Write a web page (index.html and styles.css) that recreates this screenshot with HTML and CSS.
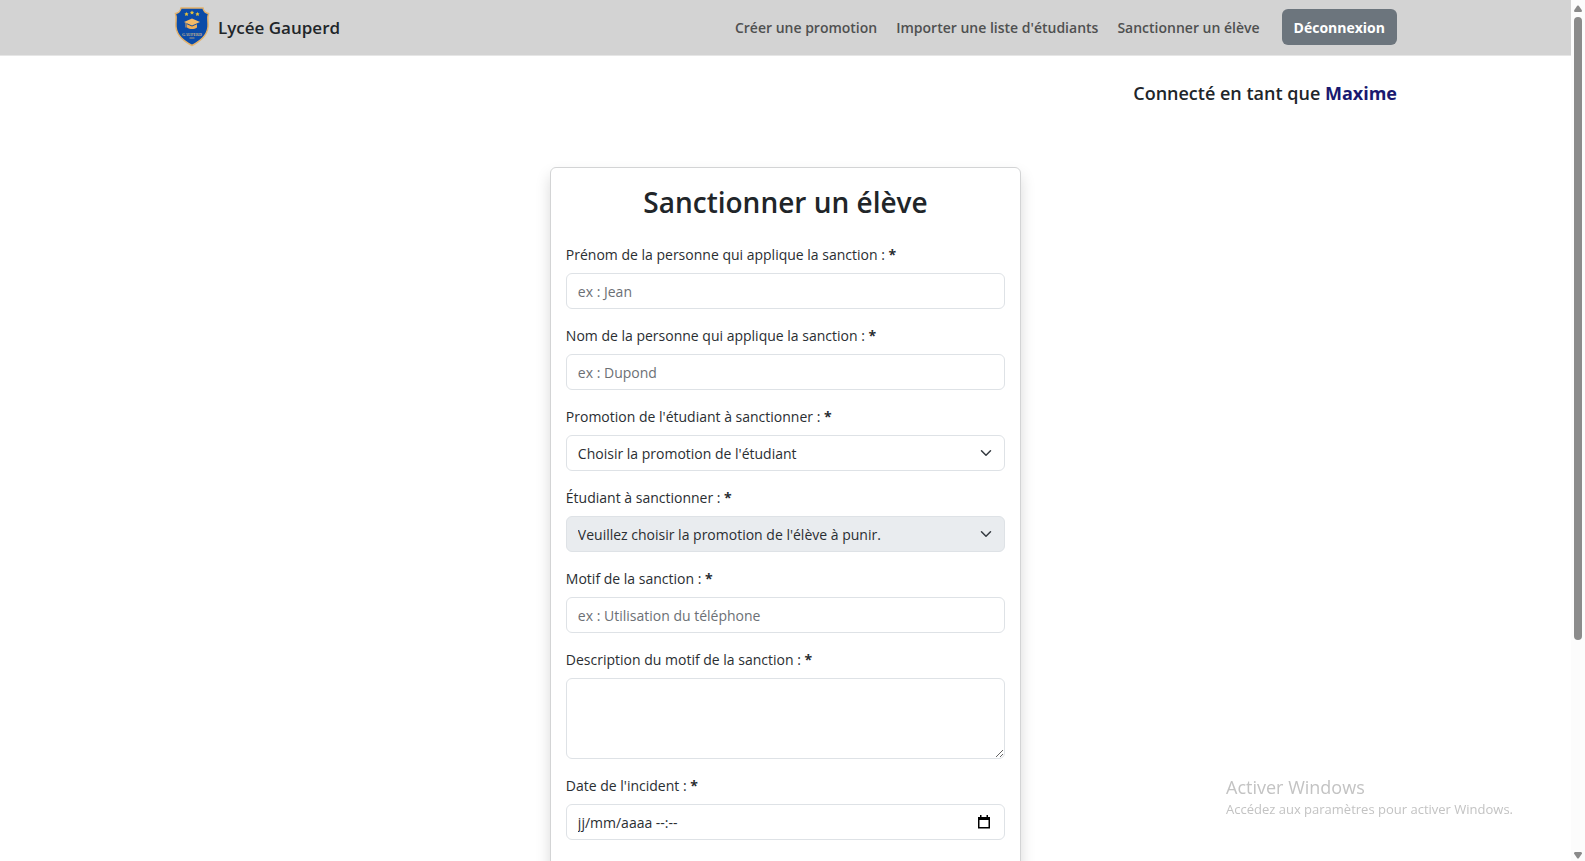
FILE: index.html
```html
<!DOCTYPE html>
<html lang="fr">
<head>
<meta charset="utf-8">
<meta name="viewport" content="width=device-width, initial-scale=1">
<title>Lycée Gauperd</title>
<link rel="stylesheet" href="styles.css">
</head>
<body class="shell">
<div class="page">
  <header class="navbar">
    <a class="brand" href="#">
      <svg class="brand-logo" viewBox="0 0 36 40" aria-hidden="true">
        <path d="M7 1H29C29.500 4 31.500 6 34.500 6.500C33 11 34.500 15 34 20C33 29 26 34 18 38.500C10 34 3 29 2 20C1.500 15 3 11 1.500 6.500C4.500 6 6.500 4 7 1Z" fill="#0b4ba8" stroke="#e3b26c" stroke-width="1.500"/>
        <path d="M12.500 5l.7 1.300 1.400.2-1 1 .2 1.400-1.300-.6-1.300.6.2-1.400-1-1 1.400-.2zM18 3.500l.7 1.300 1.400.2-1 1 .2 1.400-1.300-.6-1.300.6.2-1.400-1-1 1.400-.2zM23.500 5l.7 1.300 1.400.2-1 1 .2 1.400-1.300-.6-1.300.6.2-1.400-1-1 1.400-.2z" fill="#e3c03c"/>
        <path d="M18 11.500L26 15L18 18.500L10 15Z" fill="#f3ba68"/>
        <path d="M13 17.300L18 19.500L23 17.300V20.500C20 22.500 16 22.500 13 20.500Z" fill="#edae58"/>
        <path d="M12 15.500V20.500" stroke="#edae58" stroke-width="1"/>
        <text class="logo-name" x="18" y="28.500" text-anchor="middle">GAUPERD</text>
        <path d="M15.500 31H20.500" stroke="#a99b84" stroke-width="1"/>
      </svg>
      <span>Lycée Gauperd</span>
    </a>
    <nav class="menu">
      <a class="menu-link" href="#">Créer une promotion</a>
      <a class="menu-link" href="#">Importer une liste d'étudiants</a>
      <a class="menu-link" href="#">Sanctionner un élève</a>
      <button class="logout" type="button">Déconnexion</button>
    </nav>
  </header>

  <main class="content">
    <p class="session">Connecté en tant que <strong class="session-user">Maxime</strong></p>

    <form class="card">
      <h1 class="card-title">Sanctionner un élève</h1>
      <div class="field">
        <label for="prenom">Prénom de la personne qui applique la sanction : <b>*</b></label>
        <input class="control" id="prenom" type="text" placeholder="ex : Jean">
      </div>
      <div class="field">
        <label for="nom">Nom de la personne qui applique la sanction : <b>*</b></label>
        <input class="control" id="nom" type="text" placeholder="ex : Dupond">
      </div>
      <div class="field">
        <label for="promotion">Promotion de l'étudiant à sanctionner : <b>*</b></label>
        <div class="control-stack">
          <select class="control" id="promotion"><option>Choisir la promotion de l'étudiant</option></select>
          <svg class="chevron" viewBox="0 0 16 16" aria-hidden="true"><path d="M2 5l6 6 6-6"/></svg>
        </div>
      </div>
      <div class="field">
        <label for="etudiant">Étudiant à sanctionner : <b>*</b></label>
        <div class="control-stack">
          <select class="control" id="etudiant" disabled><option>Veuillez choisir la promotion de l'élève à punir.</option></select>
          <svg class="chevron" viewBox="0 0 16 16" aria-hidden="true"><path d="M2 5l6 6 6-6"/></svg>
        </div>
      </div>
      <div class="field">
        <label for="motif">Motif de la sanction : <b>*</b></label>
        <input class="control" id="motif" type="text" placeholder="ex : Utilisation du téléphone">
      </div>
      <div class="field">
        <label for="description">Description du motif de la sanction : <b>*</b></label>
        <textarea class="control control-area" id="description"></textarea>
      </div>
      <div class="field">
        <label for="date">Date de l'incident : <b>*</b></label>
        <div class="control-stack">
          <input class="control" id="date" type="text" value="jj/mm/aaaa --:--">
          <button class="picker" type="button" aria-label="Calendrier">
            <svg class="picker-icon" viewBox="0 0 14 14" aria-hidden="true"><path d="M1 2h12v11.500H1zM3 0h1.500v2H3zM9.500 0H11v2H9.500zM2.500 5v7h9V5z" fill="#000" fill-rule="evenodd"/></svg>
          </button>
        </div>
      </div>
    </form>
  </main>
</div>

<div class="scrollbar" aria-hidden="true">
  <svg class="scroll-arrow" viewBox="0 0 8 7"><path d="M3.200 .8Q4 0 4.800 .8L8 5.500Q8 7 7 7H1Q0 7 0 5.500Z" fill="#8a8a8a"/></svg>
  <div class="scroll-track"><div class="scroll-thumb"></div></div>
  <svg class="scroll-arrow" viewBox="0 0 8 7"><path d="M3.200 6.200Q4 7 4.800 6.200L8 1.500Q8 0 7 0H1Q0 0 0 1.500Z" fill="#8a8a8a"/></svg>
</div>

<aside class="watermark">
  <p class="watermark-title">Activer Windows</p>
  <p class="watermark-text">Accédez aux paramètres pour activer Windows.</p>
</aside>
</body>
</html>
```
FILE: styles.css
```css
* {
  box-sizing: border-box;
}

.shell {
  display: grid;
  grid-template-columns: minmax(0, 1fr) 14px;
  height: 100vh;
  margin: 0;
  overflow: hidden;
  background: #fff;
  color: #2a2e32;
  font-family: "Open Sans", "Noto Sans", sans-serif;
  font-size: 14px;
  line-height: 23px;
}

.page {
  min-width: 0;
  height: 100vh;
  overflow: hidden;
}

.navbar {
  display: flex;
  align-items: center;
  justify-content: space-between;
  padding: 7px 174px 8px;
  border-bottom: 1px solid #e6e6e6;
  background: #d3d3d3;
}

.brand {
  display: flex;
  align-items: center;
  gap: 8px;
  color: #212529;
  font-size: 17px;
  font-weight: 600;
  text-decoration: none;
}

.brand-logo {
  width: 36px;
  height: 40px;
}

.logo-name {
  fill: #c9b48c;
  font-family: "Liberation Serif", serif;
  font-size: 4px;
}

.menu {
  display: flex;
  align-items: center;
  gap: 19px;
}

.menu-link {
  color: #4f5050;
  font-weight: 600;
  text-decoration: none;
}

.logout {
  height: 36px;
  margin-left: 3px;
  padding: 0 12px;
  border: 0;
  border-radius: 6px;
  background: #6c757d;
  color: #fff;
  font: inherit;
  font-weight: 700;
}

.content {
  padding-top: 26px;
}

.session {
  margin: 0 174px 62px;
  color: #212529;
  font-size: 18px;
  font-weight: 600;
  text-align: right;
}

.session-user {
  color: #191970;
  font-weight: 700;
}

.card {
  width: 30%;
  min-width: 320px;
  margin: 0 auto;
  padding: 16px 15px 120px;
  border: 1px solid #d3d4d5;
  border-radius: 6px;
  background: #fff;
  box-shadow: 0 8px 15px rgba(0, 0, 0, 0.15);
}

.card-title {
  margin: 0 0 23px;
  color: #212529;
  font-size: 28px;
  font-weight: 600;
  line-height: 36px;
  text-align: center;
}

.field {
  display: flex;
  flex-direction: column;
  gap: 7px;
  margin-bottom: 15px;
}

.control {
  width: 100%;
  height: 36px;
  padding: 0 11px;
  border: 1px solid #dee2e6;
  border-radius: 6px;
  background: #fff;
  color: #2a2e32;
  font: inherit;
  appearance: none;
}

.control::placeholder {
  color: #6c7075;
  opacity: 1;
}

.control:disabled {
  background: #e9ecef;
  opacity: 1;
}

.control-area {
  height: 81px;
  resize: vertical;
}

.control-stack {
  display: grid;
  align-items: center;
}

.control-stack > * {
  grid-area: 1 / 1;
}

.chevron {
  width: 12px;
  height: 12px;
  margin-right: 13px;
  justify-self: end;
  fill: none;
  stroke: #343a40;
  stroke-width: 2;
  stroke-linecap: round;
  stroke-linejoin: round;
  pointer-events: none;
}

.picker {
  display: flex;
  margin-right: 14px;
  padding: 0;
  justify-self: end;
  border: 0;
  background: none;
}

.picker-icon {
  width: 14px;
  height: 14px;
}

.scrollbar {
  display: flex;
  flex-direction: column;
  align-items: center;
  gap: 5px;
  height: 100vh;
  padding: 5px 0 2px;
  background: #fcfcfc;
}

.scroll-arrow {
  width: 8px;
  height: 7px;
}

.scroll-track {
  flex: 1;
  width: 8px;
}

.scroll-thumb {
  height: 75%;
  border-radius: 4px;
  background: #8b8b8b;
}

.watermark {
  position: fixed;
  right: 72px;
  bottom: 42px;
  color: #c3c3c3;
}

.watermark p {
  margin: 0;
}

.watermark-title {
  font-size: 18px;
}

.watermark-text {
  font-size: 13px;
  line-height: 20px;
}
```
